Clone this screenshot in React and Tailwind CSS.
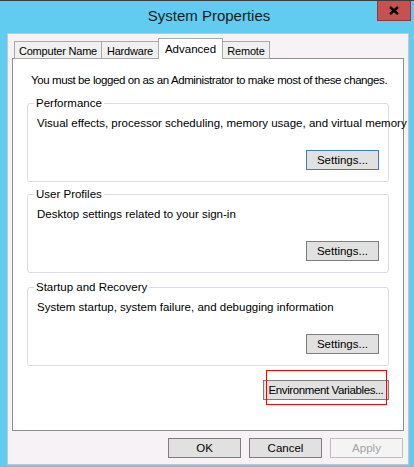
import React from "react";

const font = { fontFamily: '"Liberation Sans", Arial, sans-serif' };

const tabs = [
    { label: "Computer Name", w: "w-[88px]" },
    { label: "Hardware", w: "w-[58px]" },
    { label: "Advanced", w: "w-[65px]", active: true },
    { label: "Remote", w: "w-[48px]" },
];

const groups = [
    {
        title: "Performance",
        text: "Visual effects, processor scheduling, memory usage, and virtual memory",
        focus: true,
        mt: "mt-[9px]",
    },
    {
        title: "User Profiles",
        text: "Desktop settings related to your sign-in",
        mt: "mt-[5px]",
    },
    {
        title: "Startup and Recovery",
        text: "System startup, system failure, and debugging information",
        mt: "mt-[7px]",
    },
];

const Button = ({ children, className = "", focus, disabled }) => (
    <button
        disabled={disabled}
        className={`h-[20px] border text-[11.5px] leading-[18px] whitespace-nowrap ${
            disabled
                ? "bg-[#f4f4f4] border-[#bfbfbf] text-[#a3a3a3]"
                : focus
                ? "bg-[#e1e1e1] border-[#3c7fb1] text-black"
                : "bg-[#e1e1e1] border-[#7e7e7e] text-black"
        } ${className}`}
    >
        {children}
    </button>
);

const GroupBox = ({ title, text, focus, mt }) => (
    <fieldset
        className={`${mt} mx-[14px] min-w-0 border border-[#d9dde2] rounded-[3px] px-0 pb-[11px]`}
    >
        <legend className="ml-[6px] px-[2px] text-[11.5px] leading-[14px] text-black">
            {title}
        </legend>
        <div className="pl-[9px] pr-[9px]">
            <div className="mt-[6px] text-[11.5px] leading-[14px] text-black whitespace-nowrap">
                {text}
            </div>
            <div className="mt-[20px] flex justify-end">
                <Button focus={focus} className="w-[73px]">
                    Settings...
                </Button>
            </div>
        </div>
    </fieldset>
);

export default function App() {
    return (
        <div
            style={font}
            className="w-[414px] h-[467px] bg-[#62cbf0] border-t border-[#3d3d3d] flex flex-col pl-[7px] pr-[5px] overflow-hidden"
        >
            {/* title bar */}
            <div className="relative h-[32px] flex items-center justify-center">
                <span className="text-[15px] text-[#1b1b1b] pl-[2px] -mt-[2px]">
                    System Properties
                </span>
                <div className="absolute right-[-2px] top-[-1px] w-[34px] h-[21px] bg-[#c75050] border border-[#8a3b3b] flex items-center justify-center">
                    <svg width="10" height="9" viewBox="0 0 10 9">
                        <path d="M1 1 L9 8 M9 1 L1 8" stroke="#000" strokeWidth="2.4" />
                    </svg>
                </div>
            </div>

            {/* client area */}
            <div className="flex-1 bg-[#f6f2f6] border border-[#c6c6c6] flex flex-col mb-[2px]">
                {/* tabs */}
                <div className="flex items-end h-[21px] mt-[4px] ml-[6px] -mb-px relative z-10">
                    {tabs.map((t, i) =>
                        t.active ? (
                            <div
                                key={t.label}
                                className={`${t.w} -ml-px relative z-10 h-[21px] bg-white border-t border-l border-r border-[#a9a9a9] text-[11.5px] leading-[14px] text-black whitespace-nowrap flex justify-center pt-[3px]`}
                            >
                                {t.label}
                            </div>
                        ) : (
                            <div
                                key={t.label}
                                className={`${t.w} ${i > 0 ? "-ml-px" : ""} h-[18px] bg-[#f0f0f0] border border-[#a9a9a9] text-[11px] tracking-[-0.2px] leading-[14px] text-black whitespace-nowrap flex justify-center pt-[2px]`}
                            >
                                {t.label}
                            </div>
                        )
                    )}
                </div>

                {/* tab panel */}
                <div className="mx-[4px] h-[373px] bg-white border border-[#8f8f8f] flex flex-col">
                    <div className="mt-[14px] ml-[18px] text-[11.5px] tracking-[-0.4px] leading-[14px] text-black whitespace-nowrap">
                        You must be logged on as an Administrator to make most of these changes.
                    </div>

                    {groups.map((g) => (
                        <GroupBox key={g.title} {...g} />
                    ))}

                    <div className="mt-[11px] mr-[14px] flex justify-end">
                        <div className="relative">
                            <Button className="w-[126px] tracking-[-0.4px]">Environment Variables...</Button>
                            <div className="absolute left-[3px] right-[2px] top-[-7px] bottom-[-4px] border border-[#ff0000]" />
                        </div>
                    </div>
                </div>

                {/* dialog buttons */}
                <div className="mt-[7px] mr-[5px] flex justify-end gap-[8px]">
                    <Button className="w-[73px]">OK</Button>
                    <Button className="w-[73px]">Cancel</Button>
                    <Button className="w-[73px]" disabled>
                        Apply
                    </Button>
                </div>
            </div>
        </div>
    );
}
